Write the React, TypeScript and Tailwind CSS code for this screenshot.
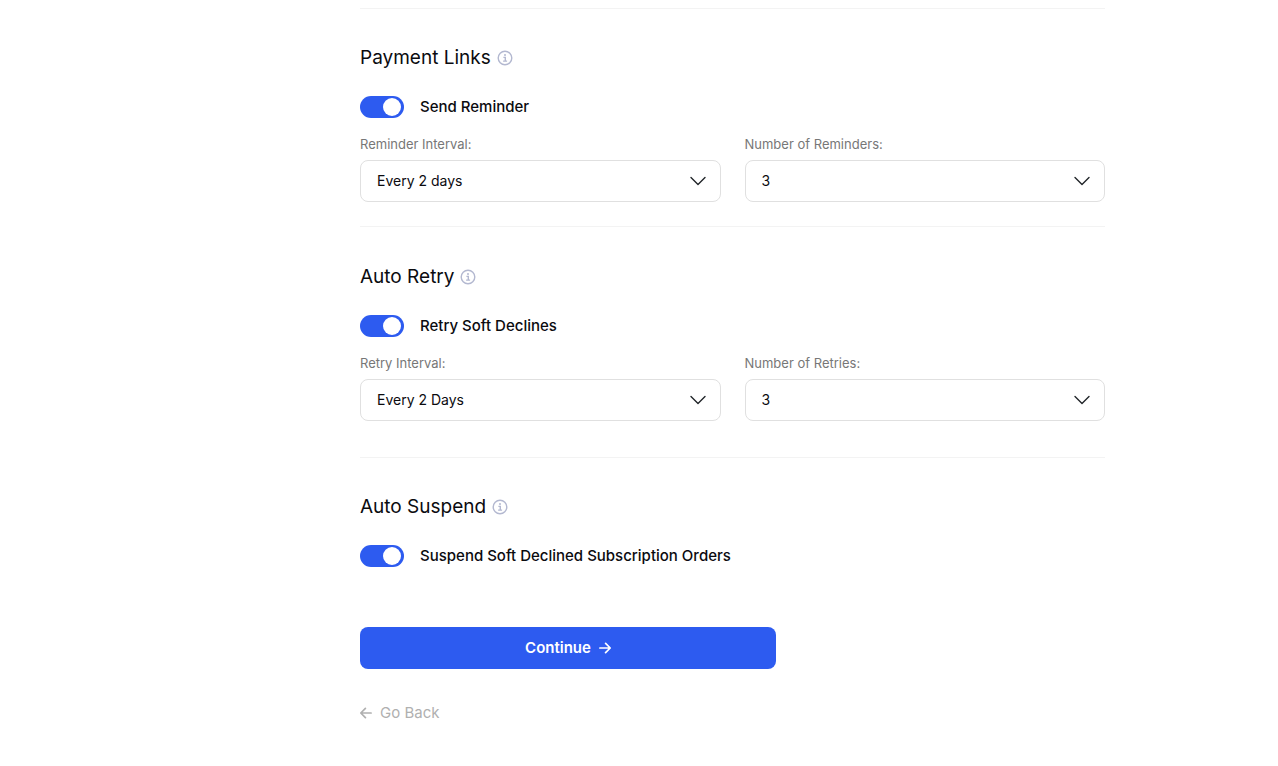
import { useState } from 'react'

const DAYS = ['1', '2', '3', '4', '5']
const COUNTS = ['1', '2', '3', '4', '5']

function InfoIcon() {
  return (
    <svg className="size-4" viewBox="0 0 16 16" fill="none" stroke="#b3b8d0" aria-hidden="true">
      <circle cx="8" cy="8" r="6.8" strokeWidth="1.4" />
      <path d="M6.4 7.4H8.3V11M6.1 11.1H10.1" strokeWidth="1.4" />
      <circle cx="8" cy="5" r="1" fill="#b3b8d0" stroke="none" />
    </svg>
  )
}

function ArrowIcon({ className }: { className?: string }) {
  return (
    <svg
      className={className}
      width="12"
      height="12"
      viewBox="0 0 12 12"
      fill="none"
      stroke="currentColor"
      strokeWidth="1.7"
      strokeLinecap="round"
      strokeLinejoin="round"
      aria-hidden="true"
    >
      <path d="M0.9 6H11M6.6 1.3L11.2 6L6.6 10.7" />
    </svg>
  )
}

function SectionTitle({ children }: { children: string }) {
  return (
    <div className="flex items-center gap-[6px] mb-6">
      <h2 className="text-[19px] leading-7">{children}</h2>
      <InfoIcon />
    </div>
  )
}

function Toggle({ id, label }: { id: string; label: string }) {
  const [on, setOn] = useState(true)

  return (
    <div className="flex items-center gap-4">
      <input
        id={id}
        type="checkbox"
        role="switch"
        checked={on}
        onChange={e => setOn(e.target.checked)}
        className="appearance-none shrink-0 w-11 h-[22px] p-[2px] rounded-full bg-gray-300 checked:bg-[#2d5bf0] cursor-pointer before:block before:size-[18px] before:rounded-full before:bg-white checked:before:ml-auto checked:before:mr-px"
      />
      <label htmlFor={id} className="text-[15px] leading-[22px] font-medium">{label}</label>
    </div>
  )
}

interface SelectFieldProps {
  id: string
  label: string
  initial: string
  options: { value: string; label: string }[]
}

function SelectField({ id, label, initial, options }: SelectFieldProps) {
  const [value, setValue] = useState(initial)

  return (
    <div>
      <label htmlFor={id} className="block text-[13px] leading-5 text-[#777777] mb-[6px]">{label}</label>
      <div className="relative">
        <select
          id={id}
          value={value}
          onChange={e => setValue(e.target.value)}
          className="block appearance-none w-full h-[42px] pl-4 pr-10 text-sm bg-white border border-[#e0e0e0] rounded-lg"
        >
          {options.map(o => (
            <option key={o.value} value={o.value}>{o.label}</option>
          ))}
        </select>
        <svg
          className="absolute right-[14px] inset-y-0 my-auto pointer-events-none"
          width="18"
          height="18"
          viewBox="0 0 18 18"
          fill="none"
          stroke="#212529"
          strokeWidth="1.4"
          strokeLinecap="round"
          strokeLinejoin="round"
          aria-hidden="true"
        >
          <path d="M2 5.5L9 12.5L16 5.5" />
        </svg>
      </div>
    </div>
  )
}

export default function BillingSettings() {
  const counts = COUNTS.map(n => ({ value: n, label: n }))

  return (
    <main className="min-h-screen bg-white pt-2 pb-10 pl-[360px] pr-[173px] font-['Inter',sans-serif] text-[#0b0b0f]">
      <section className="border-t border-[#f3f3f3] pt-[35px] pb-6">
        <SectionTitle>Payment Links</SectionTitle>
        <Toggle id="send-reminder" label="Send Reminder" />
        <div className="grid grid-cols-2 gap-6 mt-4">
          <SelectField
            id="reminder-interval"
            label="Reminder Interval:"
            initial="2"
            options={DAYS.map(d => ({ value: d, label: `Every ${d} days` }))}
          />
          <SelectField id="reminder-count" label="Number of Reminders:" initial="3" options={counts} />
        </div>
      </section>

      <section className="border-t border-[#f3f3f3] py-9">
        <SectionTitle>Auto Retry</SectionTitle>
        <Toggle id="retry-declines" label="Retry Soft Declines" />
        <div className="grid grid-cols-2 gap-6 mt-4">
          <SelectField
            id="retry-interval"
            label="Retry Interval:"
            initial="2"
            options={DAYS.map(d => ({ value: d, label: `Every ${d} Days` }))}
          />
          <SelectField id="retry-count" label="Number of Retries:" initial="3" options={counts} />
        </div>
      </section>

      <section className="border-t border-[#f3f3f3] pt-[35px]">
        <SectionTitle>Auto Suspend</SectionTitle>
        <Toggle id="suspend-orders" label="Suspend Soft Declined Subscription Orders" />
      </section>

      <button
        type="button"
        className="flex items-center justify-center gap-2 w-full max-w-[416px] h-[42px] mt-[60px] rounded-lg bg-[#2d5bf0] text-white text-[15px] font-semibold cursor-pointer"
      >
        Continue
        <ArrowIcon />
      </button>
      <button
        type="button"
        className="flex items-center gap-2 mt-8 text-[15px] leading-6 text-[#b0b0b0] cursor-pointer"
      >
        <ArrowIcon className="rotate-180" />
        Go Back
      </button>
    </main>
  )
}
